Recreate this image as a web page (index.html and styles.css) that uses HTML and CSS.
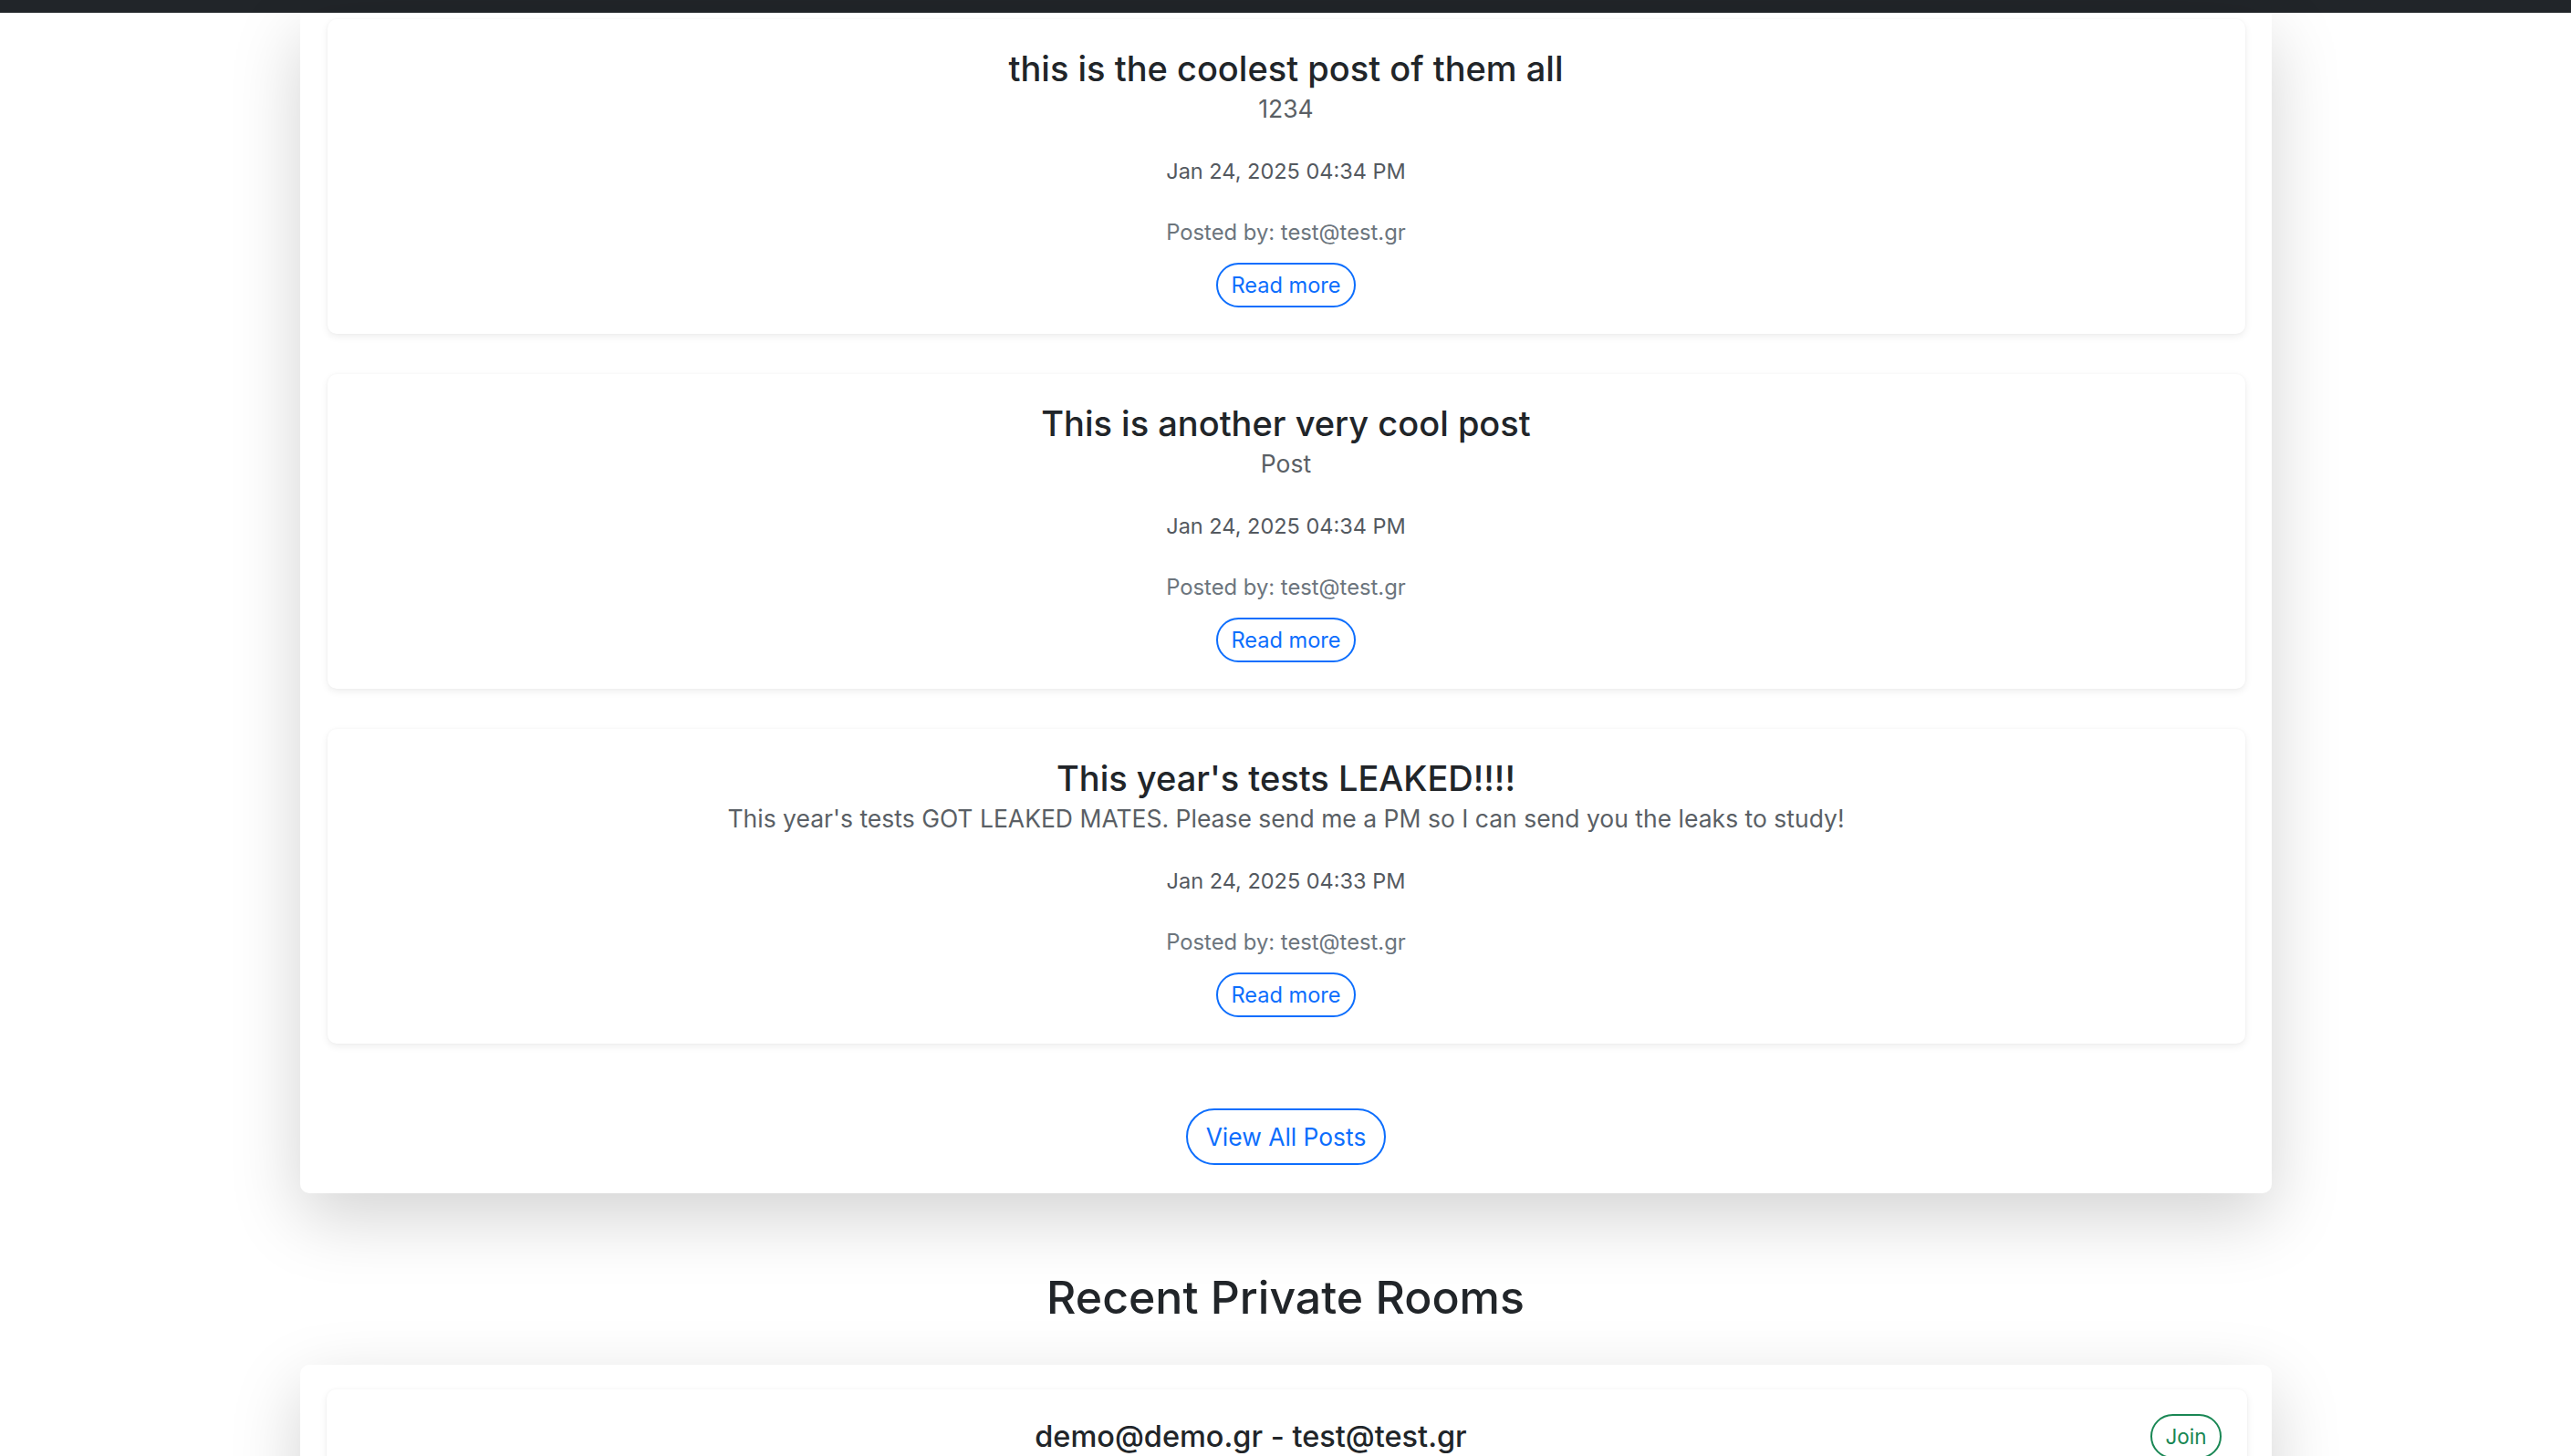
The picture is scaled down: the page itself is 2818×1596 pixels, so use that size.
FILE: index.html
```html
<!DOCTYPE html>
<html lang="en">
<head>
<meta charset="utf-8">
<title>Forum</title>
<link rel="stylesheet" href="styles.css">
</head>
<body>
<nav class="navbar"></nav>
<main class="page">
  <section class="panel panel-posts">
    <article class="post-card">
      <h4 class="post-title">this is the coolest post of them all</h4>
      <p class="post-text">1234</p>
      <p class="post-date">Jan 24, 2025 04:34 PM</p>
      <p class="post-author">Posted by: test@test.gr</p>
      <a class="btn btn-sm btn-outline-primary" href="#">Read more</a>
    </article>
    <article class="post-card">
      <h4 class="post-title">This is another very cool post</h4>
      <p class="post-text">Post</p>
      <p class="post-date">Jan 24, 2025 04:34 PM</p>
      <p class="post-author">Posted by: test@test.gr</p>
      <a class="btn btn-sm btn-outline-primary" href="#">Read more</a>
    </article>
    <article class="post-card">
      <h4 class="post-title">This year's tests LEAKED!!!!</h4>
      <p class="post-text">This year's tests GOT LEAKED MATES. Please send me a PM so I can send you the leaks to study!</p>
      <p class="post-date">Jan 24, 2025 04:33 PM</p>
      <p class="post-author">Posted by: test@test.gr</p>
      <a class="btn btn-sm btn-outline-primary" href="#">Read more</a>
    </article>
    <div class="view-all">
      <a class="btn btn-lg-outline" href="#">View All Posts</a>
    </div>
  </section>

  <h2 class="section-heading">Recent Private Rooms</h2>

  <section class="panel panel-rooms">
    <div class="room-card">
      <h5 class="room-title">demo@demo.gr - test@test.gr</h5>
      <a class="btn btn-sm btn-outline-success" href="#">Join</a>
    </div>
  </section>
</main>
</body>
</html>
```
FILE: styles.css
```css
html, body {
  margin: 0;
  padding: 0;
  background: #ffffff;
}

body {
  font-family: "Inter", "Liberation Sans", sans-serif;
  color: #212529;
}

.navbar {
  height: 14px;
  background: #212529;
}

.page {
  width: 2161px;
  margin: 0 auto;
  padding-bottom: 120px;
}

.panel {
  background: #ffffff;
  border-radius: 10px;
  box-shadow: 0 26px 77px rgba(0, 0, 0, 0.175);
}

.panel-posts {
  display: flex;
  flex-direction: column;
  gap: 44px;
  padding: 7px 29px 31px 30px;
  border-top-left-radius: 0;
  border-top-right-radius: 0;
}

.post-card {
  background: #ffffff;
  border-radius: 10px;
  box-shadow: 0 3px 8px rgba(0, 0, 0, 0.07), 0 0 3px rgba(0, 0, 0, 0.04);
  padding: 31px 29px 29px;
  text-align: center;
  display: flex;
  flex-direction: column;
  align-items: center;
}

.post-title {
  margin: 0;
  font-size: 38px;
  font-weight: 500;
  line-height: 46px;
  color: #212529;
}

.post-text {
  margin: 2px 0 0;
  font-size: 26.5px;
  line-height: 38px;
  color: #5a5f65;
}

.post-date {
  margin: 31px 0 0;
  font-size: 23.5px;
  line-height: 38px;
  color: #54595f;
}

.post-author {
  margin: 28.5px 0 0;
  font-size: 23.8px;
  line-height: 38px;
  color: #6c757d;
}

.btn {
  display: inline-flex;
  align-items: center;
  justify-content: center;
  box-sizing: border-box;
  border: 2px solid currentColor;
  border-radius: 999px;
  text-decoration: none;
  white-space: nowrap;
}

.btn-sm {
  height: 49px;
  padding: 0 14px;
  font-size: 23.6px;
}

.post-card .btn-sm {
  margin-top: 14.5px;
}

.btn-outline-primary {
  color: #0d6efd;
}

.btn-outline-success {
  color: #198754;
  font-size: 22.5px;
}

.view-all {
  margin-top: 27px;
  display: flex;
  justify-content: center;
}

.btn-lg-outline {
  height: 62px;
  padding: 0 20px;
  font-size: 26.4px;
  color: #0d6efd;
}

.section-heading {
  margin: 84px 0 44px;
  text-align: center;
  font-size: 50px;
  font-weight: 500;
  line-height: 60px;
  color: #212529;
}

.panel-rooms {
  padding: 27px 27px 27px 29px;
}

.room-card {
  display: flex;
  align-items: center;
  background: #ffffff;
  border-radius: 10px;
  box-shadow: 0 3px 8px rgba(0, 0, 0, 0.07), 0 0 3px rgba(0, 0, 0, 0.04);
  padding: 27px 28px 27px 27px;
}

.room-title {
  flex: 1;
  margin: 0;
  text-align: center;
  font-size: 32.5px;
  font-weight: 500;
  line-height: 40px;
  color: #212529;
}
```
